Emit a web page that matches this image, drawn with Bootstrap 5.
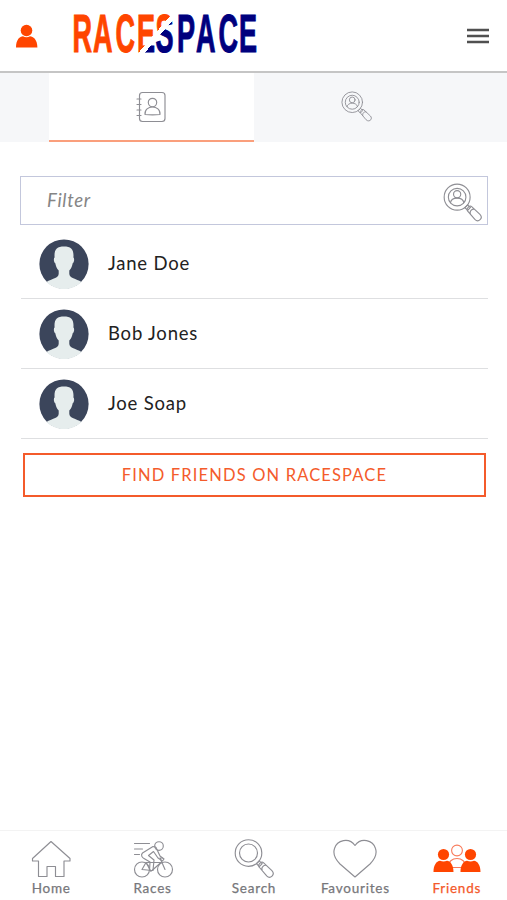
<!DOCTYPE html>
<html lang="en">
<head>
<meta charset="utf-8">
<meta name="viewport" content="width=device-width, initial-scale=1">
<title>RaceSpace – Friends</title>
<link href="https://cdn.jsdelivr.net/npm/bootstrap@5.3.0/dist/css/bootstrap.min.css" rel="stylesheet">
<style>
body{font-family:Lato,"Open Sans",sans-serif;color:#222;height:900px;overflow:hidden}
svg{display:block;flex:none}
.line-art{fill:none;stroke:#8e8e94;stroke-width:1.15;stroke-linejoin:round;stroke-linecap:round}
.top-bar{height:73px;border-bottom:2px solid #c5c5c5;padding-left:15px;padding-right:17px}
.brand-mark{margin-left:31px}
.brand-text{font:700 54px "Liberation Sans",Arial,sans-serif}
.tab-strip{height:69px;background:#f6f7f9;padding-left:49px}
.tab-cell{width:205px;border-radius:0;padding:0 0 1px;border-bottom:1px solid transparent}
.tab-cell.active{background:#fff;border-bottom:2px solid #fa9f7c;padding:0}
.content-area{padding:34px 19px 0 20px}
.filter-box{height:49px;border:1px solid #c3c7dc;padding:0 5px 0 26px}
.filter-box input{font-size:18.5px;font-style:italic;letter-spacing:.7px;color:#777}
.filter-box input::placeholder{color:#858585;opacity:1}
.friend-list{padding-top:3px}
.friend-row{height:70px;border-bottom:1px solid #dedfe1;padding-left:18px;gap:19px;margin-left:1px}
.friend-row:first-child{height:71px;padding-top:2px}
.friend-name{font-size:18.5px;letter-spacing:.8px;color:#222}
.find-btn{height:44px;margin:14px 2px 0 3px;border:2px solid #f45b2b;border-radius:0;color:#f45b2b;font-size:16.5px;letter-spacing:1.15px;width:463px}
.bottom-nav{height:70px;border-top:1px solid #f3f3f3;padding-top:6px}
.bottom-nav a{width:20%;color:#77777b;font-size:13.5px;letter-spacing:.78px;line-height:18px;-webkit-text-stroke:.25px currentColor;padding-left:1px}
.bottom-nav a.current{color:#f4592b}
</style>
<script src="https://cdn.jsdelivr.net/npm/bootstrap@5.3.0/dist/js/bootstrap.bundle.min.js"></script>
</head>
<body class="d-flex flex-column bg-white">
<svg width="0" height="0" class="position-absolute" aria-hidden="true">
  <symbol id="lens" viewBox="0 0 40 40">
    <circle cx="14.5" cy="14.5" r="13.3"/><circle cx="14.5" cy="14.5" r="9"/>
    <path d="M22.400 25.200l2.800-2.800 3 2.700-2.900 3zM25.100 28.500c-1.800-1.900 2.200-6.300 4.300-4.300l8.500 8c3.700 3.900-1.600 8.900-5.200 5.200zM28.100 31.200c-1-2.300 2-5.300 4.300-4.200"/>
  </symbol>
  <symbol id="lens-person" viewBox="0 0 40 40">
    <use href="#lens" width="40" height="40"/>
    <circle cx="14.5" cy="11.5" r="3.7"/><path d="M7.700 20.200c1-6.200 12.600-6.200 13.600 0"/>
  </symbol>
  <symbol id="avatar" viewBox="0 0 50 50">
    <circle cx="25" cy="25" r="24.6" fill="#3b455b"/>
    <path fill="#e6eded" d="M15.600 18.500c-.7-8 2.300-11 9.400-11s10.100 3 9.400 11c1.200.8.9 4.700-.7 5.800-.5 3-1.500 5.300-3.400 7.200v3.200c0 4.600 6.800 4.800 12.200 8.200a24.600 24.600 0 0 1-35 0c5.400-3.400 12.200-3.600 12.200-8.200v-3.200c-1.900-1.900-2.900-4.200-3.400-7.200-1.600-1.100-1.900-5-.7-5.800z"/>
  </symbol>
</svg>

<header class="top-bar d-flex align-items-center flex-shrink-0">
  <svg width="24" height="24" viewBox="0 0 24 24" fill="#ff4500" aria-label="Profile"><circle cx="11.5" cy="6.500" r="5.800"/><path d="M1 23.500c0-8 4-11.200 7-11.200 2 1.200 5 1.200 7 0 3 0 7.400 3.200 7.400 11.200z"/></svg>
  <svg class="brand-mark overflow-visible" width="192" height="71" viewBox="70 0 192 71">
    <defs><linearGradient id="split" gradientUnits="userSpaceOnUse" x1="140" y1="51" x2="143.600" y2="54.100" gradientTransform="scale(2 1) translate(-74 0)">
      <stop offset="0" stop-color="#ff4500"/><stop offset="0" stop-color="#fff"/><stop offset="1" stop-color="#fff"/><stop offset="1" stop-color="#00007d"/>
    </linearGradient></defs>
    <text class="brand-text" transform="translate(74 0) scale(.5 1)" x="-3 38 83 126 163 206 244 289 330" y="52.500" fill="url(#split)" stroke="url(#split)" stroke-width="1">RACESPACE</text>
  </svg>
  <svg class="ms-auto" width="24" height="20" viewBox="0 0 24 20" stroke="#505050" stroke-width="2.500" aria-label="Menu"><path d="M1 4h22M1 10h22M1 16h22"/></svg>
</header>

<nav class="tab-strip nav d-flex flex-nowrap flex-shrink-0">
  <a class="tab-cell nav-link active d-flex align-items-center justify-content-center" href="#" aria-label="Contacts">
    <svg class="line-art" width="32" height="34" viewBox="0 0 32 34"><rect x="3.500" y="2.500" width="25.500" height="29" rx="3"/><path d="M1 9h4M1 14.500h4M1 20h4M1 25.500h4M9 24.500c-1-10 16-10 15 0q-7.500.8-15 0z"/><circle cx="16.500" cy="12.500" r="4.200"/></svg>
  </a>
  <a class="tab-cell nav-link d-flex align-items-center justify-content-center" href="#" aria-label="Find people">
    <svg class="line-art" width="31" height="31"><use href="#lens-person"/></svg>
  </a>
</nav>

<main class="content-area flex-grow-1">
  <div class="filter-box d-flex align-items-center">
    <input class="form-control border-0 p-0 bg-transparent shadow-none" type="text" placeholder="Filter" aria-label="Filter">
    <svg class="line-art mt-1" width="39" height="39"><use href="#lens-person"/></svg>
  </div>
  <div class="friend-list d-flex flex-column">
    <div class="friend-row d-flex align-items-center"><svg width="50" height="50"><use href="#avatar"/></svg><span class="friend-name">Jane Doe</span></div>
    <div class="friend-row d-flex align-items-center"><svg width="50" height="50"><use href="#avatar"/></svg><span class="friend-name">Bob Jones</span></div>
    <div class="friend-row d-flex align-items-center"><svg width="50" height="50"><use href="#avatar"/></svg><span class="friend-name">Joe Soap</span></div>
  </div>
  <button class="find-btn btn p-0" type="button">FIND FRIENDS ON RACESPACE</button>
</main>

<nav class="bottom-nav d-flex flex-shrink-0">
  <a class="d-flex flex-column align-items-center text-decoration-none" href="#">
    <svg class="line-art" width="42" height="42" viewBox="0 0 42 42"><path d="M21 4.500L2.500 21.500v2.500h6v15.500h8.500v-10h8.500v10h8.500V24h6v-2.500z"/></svg>Home</a>
  <a class="d-flex flex-column align-items-center text-decoration-none" href="#">
    <svg class="line-art" width="42" height="42" viewBox="0 0 42 42"><circle cx="10" cy="32.500" r="7.500"/><circle cx="33" cy="32.500" r="7.500"/><circle cx="27" cy="9" r="4.300"/><path d="M2.500 6.500h15M2.500 12h8M2.500 17.500h5M10 32.500l4-7h15l-9 8zM33 32.500l-5-11.500h2.500M14 25.500l5 9"/><path d="M21 9.500L10.500 16c-2 2-.5 4.500 1.500 5.500l6 3.500-.5 8.500h3.500l1-10.500-5.500-4.500 5-4 4.500 6.500 4.500 3 1.500-2-4-3-3.500-7.500q-.5-2-3.500-2z"/></svg>Races</a>
  <a class="d-flex flex-column align-items-center text-decoration-none" href="#">
    <svg class="line-art" width="42" height="42" viewBox="-1 -1.500 42 42"><use href="#lens" width="40" height="40"/></svg>Search</a>
  <a class="d-flex flex-column align-items-center text-decoration-none" href="#">
    <svg class="line-art" width="44" height="42" viewBox="0 0 44 42"><path d="M22 40L7 27C1 21 0 16 1.500 11.500 4 3 16 0 22 8.500 28 0 40 3 42.500 11.500 44 16 43 21 37 27z"/></svg>Favourites</a>
  <a class="current d-flex flex-column align-items-center text-decoration-none" href="#" aria-current="page">
    <svg width="50" height="42" viewBox="0 0 50 42"><g fill="#fff" stroke="#f87b5b" stroke-width="1.100"><circle cx="25" cy="13.500" r="5.400"/><path d="M16 30.500c0-12 18-12 18 0z"/></g><g fill="#ff4500"><circle cx="11.500" cy="17.500" r="5.600"/><path d="M1.500 35c0-7 3-11 6.500-11.300q3.500 1.500 7 0c3.500.3 6.500 4.300 6.500 11.300z"/><circle cx="38.500" cy="17.500" r="5.600"/><path d="M28.500 35c0-7 3-11 6.500-11.300q3.500 1.500 7 0c3.500.3 6.500 4.300 6.500 11.300z"/></g></svg>Friends</a>
</nav>
</body>
</html>
